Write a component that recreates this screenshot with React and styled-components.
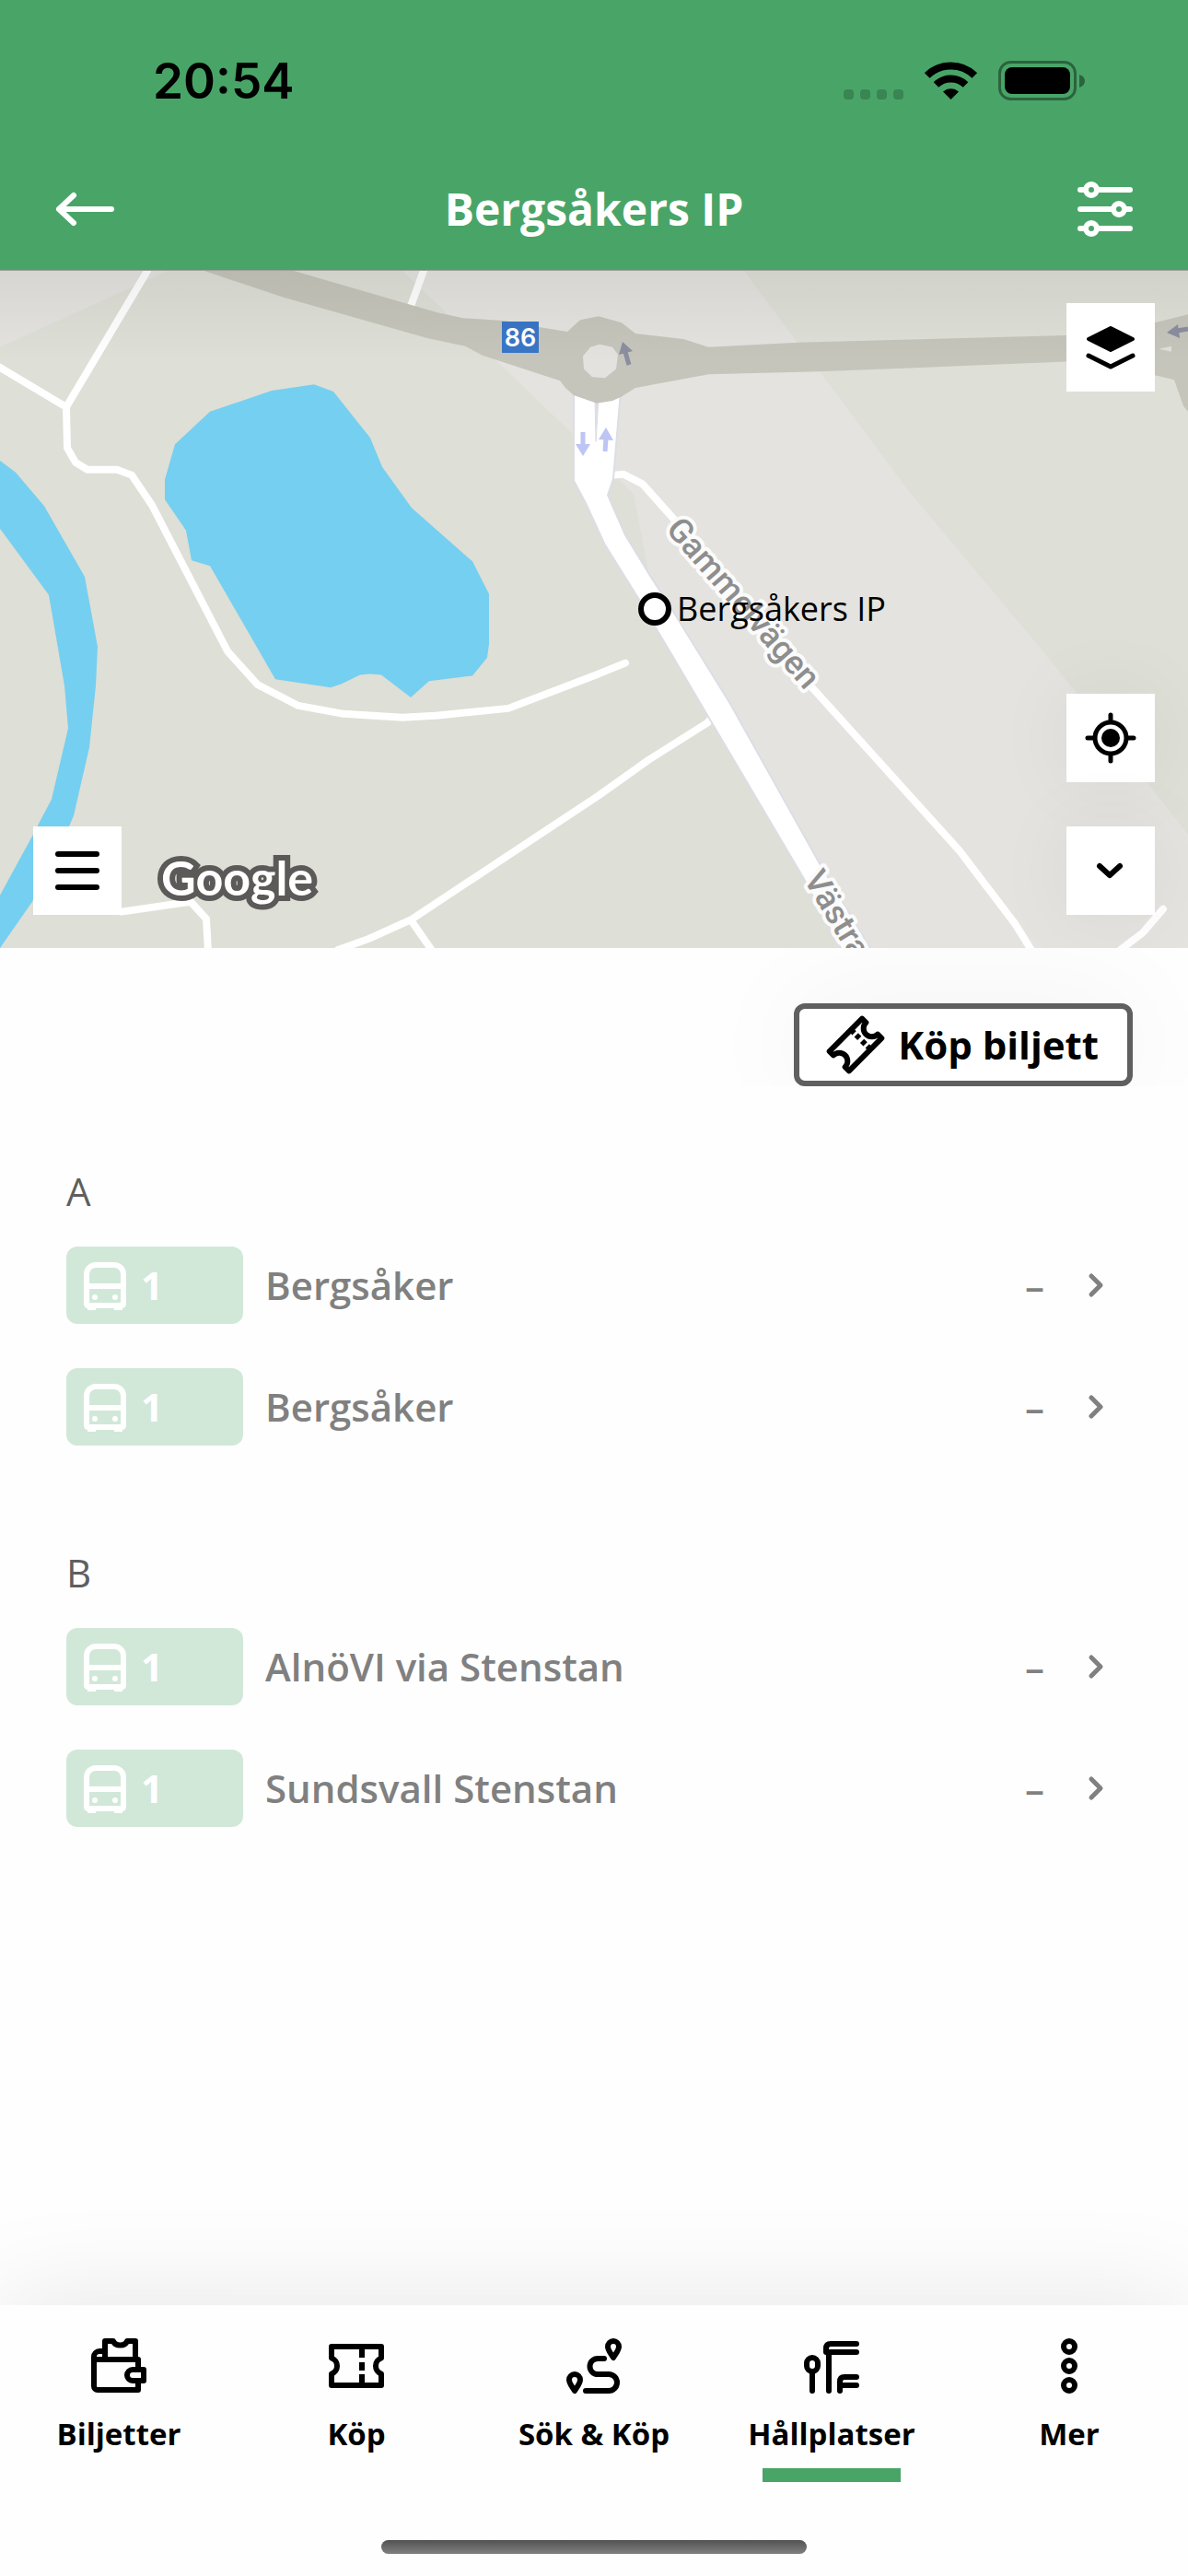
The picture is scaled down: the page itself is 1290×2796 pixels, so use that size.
import styled, { createGlobalStyle } from "styled-components";

const GREEN = "#48a567";

const GlobalStyle = createGlobalStyle`
    * {
        box-sizing: border-box;
    }

    body {
        margin: 0;
        background-color: #fefefe;
        font-family: "Open Sans", "Noto Sans", sans-serif;
        color: black;
    }

    button {
        font-family: inherit;
        cursor: pointer;
    }
`

const Screen = styled.div`
    display: flex;
    flex-direction: column;
    min-height: 100vh;
    overflow: hidden;
`

const Header = styled.header`
    background-color: ${GREEN};
`

const StatusBar = styled.div`
    display: flex;
    align-items: center;
    justify-content: space-between;
    height: 161px;
    padding: 14px 112px 0 166px;
`

const Clock = styled.time`
    font-family: Inter, sans-serif;
    font-size: 53px;
    line-height: 60px;
    font-weight: 600;
`

const StatusIcons = styled.div`
    display: flex;
    align-items: flex-end;
    gap: 23px;
    height: 45px;
`

const TitleBar = styled.div`
    display: grid;
    grid-template-columns: 60px 1fr 60px;
    align-items: center;
    height: 132px;
    padding: 0 60px;
`

const Title = styled.h1`
    margin: 0;
    color: white;
    font-size: 48px;
    line-height: 66px;
    font-weight: 700;
    text-align: center;
`

const IconButton = styled.button`
    display: flex;
    padding: 0;
    border: none;
    background: none;
    color: white;
`

const Icon = styled.svg`
    display: block;
    flex: none;
    width: 60px;
    height: 60px;
    fill: none;
    stroke: currentColor;
    stroke-width: ${props => props.$weight || 6};
    stroke-linecap: ${props => props.$cap || "round"};
    stroke-linejoin: round;
`

const MapArea = styled.section`
    position: relative;
    height: 736px;
    border-top: 1px solid #a3a29d;
    background-color: #dedfd6;
    overflow: hidden;
`

const MapLayer = styled.svg`
    position: absolute;
    inset: 0;
    width: 100%;
    height: 100%;
`

const MapShade = styled.div`
    position: absolute;
    inset: 0 0 auto 0;
    height: 100px;
    background: linear-gradient(rgba(0, 0, 0, 0.06), rgba(0, 0, 0, 0));
`

const MapControls = styled.div`
    position: absolute;
    top: 35px;
    bottom: 36px;
    ${props => props.$side}: 36px;
    display: flex;
    flex-direction: column;
    gap: 48px;
`

const MapButton = styled.button`
    display: flex;
    align-items: center;
    justify-content: center;
    width: 96px;
    height: 96px;
    padding: 0;
    border: none;
    background-color: white;
    color: black;
    box-shadow: 0 0 90px rgba(0, 0, 0, ${props => props.$shadow || 0});
    margin-top: ${props => props.$push ? "auto" : "0"};
`

const BuyBar = styled.div`
    display: flex;
    justify-content: flex-end;
    padding: 60px 60px 0;
    overflow: hidden;
`

const BuyButton = styled.button`
    display: flex;
    align-items: center;
    gap: 16px;
    height: 90px;
    padding: 0 31px;
    border: 6px solid #5f5f5f;
    border-radius: 12px;
    background-color: white;
    color: black;
    font-size: 42px;
    line-height: 58px;
    font-weight: 700;
    box-shadow: 0 0 120px rgba(0, 0, 0, 0.05);
`

const Departures = styled.main`
    display: flex;
    flex-direction: column;
    gap: 78px;
    padding: 78px 72px;
`

const StopName = styled.h2`
    margin: 0;
    color: #5f5f5f;
    font-size: 42px;
    line-height: 72px;
    font-weight: 400;
`

const LineList = styled.ul`
    margin: 0;
    padding: 0;
    list-style: none;
`

const LineRow = styled.button`
    display: flex;
    align-items: center;
    gap: 24px;
    width: 100%;
    height: 132px;
    padding: 0;
    border: none;
    background: none;
    color: #808080;
    font-size: 42px;
    line-height: 58px;
    font-weight: 600;
    text-align: left;
`

const LineBadge = styled.span`
    display: flex;
    align-items: center;
    gap: 9px;
    width: 192px;
    height: 84px;
    padding: 0 12px;
    border-radius: 12px;
    background-color: #d1e8d9;
    color: white;
    font-weight: 700;
`

const Destination = styled.span`
    flex: 1;
`

const TabBar = styled.footer`
    display: flex;
    flex-direction: column;
    align-items: center;
    gap: 63px;
    margin-top: auto;
    padding: 36px 0 24px;
    background-color: #fefefe;
    box-shadow: 0 0 120px rgba(0, 0, 0, 0.1);
`

const Tabs = styled.nav`
    display: grid;
    grid-template-columns: repeat(5, 1fr);
    width: 100%;
`

const Tab = styled.a`
    display: flex;
    flex-direction: column;
    align-items: center;
    gap: 20px;
    color: black;
    font-size: 33px;
    line-height: 48px;
    font-weight: 700;
    text-decoration: none;

    &::after {
        content: "";
        width: 150px;
        height: 15px;
        margin-top: -7px;
        background-color: ${props => props.$active ? GREEN : "transparent"};
    }
`

const HomeIndicator = styled.div`
    width: 462px;
    height: 15px;
    border-radius: 8px;
    background: linear-gradient(#525252, #808080);
`

const ICONS = {
    back: <path d="M61 30H4M20 15L4 30l16 15" />,
    filters: (
        <>
            <path d="M3 9h6M21 9h36M3 30h36M51 30h6M3 51h6M21 51h36" />
            <circle cx="15" cy="9" r="6" />
            <circle cx="45" cy="30" r="6" />
            <circle cx="15" cy="51" r="6" />
        </>
    ),
    layers: (
        <>
            <path d="M30 9L54 21 30 33 6 21z" fill="currentColor" strokeWidth="4" />
            <path d="M6 39l24 12 24-12" />
        </>
    ),
    locate: (
        <>
            <circle cx="30" cy="30" r="17" />
            <circle cx="30" cy="30" r="10" fill="currentColor" stroke="none" />
            <path d="M30 5v7M30 48v7M5 30h7M48 30h7" />
        </>
    ),
    down: <path d="M18 25l11 10 11-10" />,
    menu: <path d="M9 12h42M9 30h42M9 48h42" />,
    next: <path d="M27 20l10 10-10 10" />,
    bus: (
        <>
            <path d="M10 18a10 10 0 0 1 10-10h20a10 10 0 0 1 10 10v32q0 2-2 2H12q-2 0-2-2zM10 31h40" />
            <path d="M11 53h9v4h-9zM40 53h9v4h-9z" fill="currentColor" stroke="none" />
            <circle cx="19" cy="43" r="3" fill="currentColor" stroke="none" />
            <circle cx="41" cy="43" r="3" fill="currentColor" stroke="none" />
        </>
    ),
    ticketTilted: (
        <g transform="rotate(-45 30 30)">
            <path d="M5 15h50v6a8.500 8.500 0 0 0 0 18v6H5v-6a8.500 8.500 0 0 0 0-18z" />
            <path d="M38 15v5M38 23v5M38 32v5M38 40v5" />
        </g>
    ),
    wallet: (
        <>
            <path d="M14 14H9a6 6 0 0 0-6 6v32a4 4 0 0 0 4 4h44v-9M3 23h48v10" />
            <path d="M15 23V3h9c2 6 13 6 15 0h9v20" />
            <path d="M57 34v12H45a6 6 0 0 1 0-12z" />
        </>
    ),
    ticket: (
        <>
            <path d="M3 9h54v12.500a9 9 0 0 0 0 17V51H3V38.500a9 9 0 0 0 0-17z" />
            <path d="M36 9v12M36 26v9M36 39v12" />
        </>
    ),
    route: (
        <>
            <path d="M51 21c-3-5-6-8-6-12a6 6 0 0 1 12 0c0 4-3 7-6 12z" />
            <path d="M9 57c-3-5-6-8-6-12a6 6 0 0 1 12 0c0 4-3 7-6 12z" />
            <path d="M41 22h-7a8 8 0 0 0 0 17h12a9 9 0 0 1 0 18H21" />
        </>
    ),
    stop: (
        <>
            <rect x="3" y="21" width="12" height="15" rx="6" />
            <path d="M9 37v20M27 16v41" />
            <path d="M57 6H29q-5 0-5 5v4h33" />
            <path d="M57 42H44q-5 0-5 5v10M39 51h18" />
        </>
    ),
    more: (
        <>
            <circle cx="30" cy="9" r="6" />
            <circle cx="30" cy="30" r="6" />
            <circle cx="30" cy="51" r="6" />
        </>
    ),
};

const AppIcon = ({ name, weight, cap }) => (
    <Icon viewBox="0 0 60 60" $weight={weight} $cap={cap} aria-hidden="true" overflow="visible">
        {ICONS[name]}
    </Icon>
);

const STOPS = [
    { name: "A", lines: [{ line: "1", to: "Bergsåker" }, { line: "1", to: "Bergsåker" }] },
    { name: "B", lines: [{ line: "1", to: "AlnöVI via Stenstan" }, { line: "1", to: "Sundsvall Stenstan" }] },
];

const TABS = [
    { label: "Biljetter", icon: "wallet", href: "#biljetter" },
    { label: "Köp", icon: "ticket", href: "#kop", cap: "butt" },
    { label: "Sök & Köp", icon: "route", href: "#sok" },
    { label: "Hållplatser", icon: "stop", href: "#hallplatser", active: true },
    { label: "Mer", icon: "more", href: "#mer" },
];

const PhoneStatus = () => (
    <StatusBar>
        <Clock>20:54</Clock>
        <StatusIcons>
            <svg width="65" height="13" viewBox="0 0 65 13" fill="#398553">
                <rect width="11" height="11" rx="4" />
                <rect x="18" width="11" height="11" rx="4" />
                <rect x="36" width="11" height="11" rx="4" />
                <rect x="54" width="11" height="11" rx="4" />
            </svg>
            <svg width="57" height="44" viewBox="0 0 57 44">
                <path d="M28.500 42L20 33.500a12.500 12.500 0 0 1 17 0z" />
                <path d="M12.500 26a23 23 0 0 1 32 0M2.700 16a37 37 0 0 1 51.600 0" fill="none" stroke="black" strokeWidth="8" />
            </svg>
            <svg width="94" height="44" viewBox="0 0 94 44">
                <rect x="1.500" y="1.500" width="82" height="40" rx="12" fill="none" stroke="#2c633e" strokeWidth="3" />
                <rect x="7" y="7" width="71" height="29" rx="8" />
                <path d="M88 15q6 2 6 7t-6 7z" fill="#2c633e" />
            </svg>
        </StatusIcons>
    </StatusBar>
);

const Terrain = () => (
    <MapLayer viewBox="0 0 1290 746" preserveAspectRatio="none" aria-hidden="true">
        <g fill="#e4e3df">
            <path d="M0 0H182L0 84z" />
            <path d="M437 0H808L867 81 891 112 984 239 1140 428 1290 621V746H945L783 474 704 331 688 246 673 231 622 180z" />
        </g>
        <g fill="#75cff0">
            <path d="M341 125L362 133 402 184 415 216 447 261 513 320 531 356V411L529 426 513 446 466 452 446 470 414 445 402 444 391 445 371 455 359 459 299 450 228 325 208 319 202 286 179 252V230L190 191 228 155 295 132z" />
            <path d="M0 209L17 222 48 259 92 337 106 414 104 457 97 525 80 600 75 612 35 695 0 746V688L36 621 41 611 56 582 74 504 70 457 53 357 0 284z" />
        </g>
        <g fill="none" stroke="white" strokeWidth="8" strokeLinejoin="round" strokeLinecap="round">
            <path d="M160 0L72 150 73 195 82 211 95 219H127L143 225 165 258 247 419 280 456 324 479 373 488 437 492 473 490 552 482 650 444 679 432" />
            <path d="M-4 104L72 150M462-6L446 39" />
            <path d="M132 706L207 695 224 714 226 750M367 748L400 736 446 715 650 578 704 539 768 498 775 490M446 715L470 750" />
            <path d="M667 225L677 224 698 235 733 275 880 457 1042 639 1102 719 1121 750M1214 750L1241 729 1263 703" />
        </g>
        <path
            d="M623 132V231L636 256 657 302 694 362 872 668 914 748H946L889 651 793 477 729 372 706 336 679 291 660 247 666 229 674 132z"
            fill="white"
            stroke="#dcdee6"
            strokeWidth="2"
        />
        <path d="M646 140L647 188 650 140z" fill="#dcdee6" stroke="#dcdee6" strokeWidth="1" />
        <path
            d="M222 0L307 29 464 74 505 83 524 93 608 121 614 129 623 137 648 146 665 143 674 139 690 129 769 114 889 111 1158 100 1254 115 1275 120 1285 149 1290 155V48L1254 57 1158 71 867 79 769 84 742 75 690 69 675 57 650 50 630 54 616 67 585 62 549 55 503 52 475 46 319 0z"
            fill="#c5c5bb"
        />
        <path d="M651 81L665 84 671 92 669 108 657 118 643 117 634 108 633 94 641 84z" fill="#e3e2de" />
        <path d="M1258 86L1272 83V89z" fill="#dedfd6" />
    </MapLayer>
);

const MapLabels = () => (
    <MapLayer viewBox="0 0 1290 735">
        <rect x="545" y="55" width="40" height="34" fill="#3976c7" />
        <text x="565" y="82" textAnchor="middle" fontFamily="Inter, sans-serif" fontSize="27" fontWeight="600" fill="white">86</text>
        <g fill="none" stroke="#bcc5f3" strokeWidth="5">
            <path d="M633 175v14" />
            <path d="M657 196l1-14" />
        </g>
        <path d="M625 188h16l-8 13zM650 183l8-13 8 14z" fill="#bcc5f3" />
        <path d="M683 102l-4-14M1290 63l-12 2" stroke="#8a8e9f" strokeWidth="5" />
        <path d="M676 77l11 10-15 4zM1267 67l12-9 2 15z" fill="#8a8e9f" />
        <g
            fontFamily="Roboto, sans-serif"
            fontSize="36"
            fontWeight="500"
            fill="#8e8e8e"
            stroke="#fbfbfb"
            strokeWidth="8"
            strokeLinejoin="round"
            paintOrder="stroke"
        >
            <text transform="translate(722 281) rotate(49)">Gammelvägen</text>
            <text transform="translate(872 660) rotate(59)">Västra</text>
        </g>
        <circle cx="711" cy="367" r="15" fill="white" stroke="black" strokeWidth="6" />
        <text x="735" y="380" fontFamily="Open Sans, sans-serif" fontSize="36">Bergsåkers IP</text>
        <text
            x="175"
            y="678"
            fontFamily="Lato, sans-serif"
            fontSize="52"
            fontWeight="700"
            fill="white"
            stroke="#5b5a58"
            strokeWidth="12"
            paintOrder="stroke"
        >
            Google
        </text>
    </MapLayer>
);

const StopMap = () => (
    <MapArea aria-label="Karta">
        <Terrain />
        <MapLabels />
        <MapShade />
        <MapControls $side="left">
            <MapButton aria-label="Meny" $push><AppIcon name="menu" /></MapButton>
        </MapControls>
        <MapControls $side="right">
            <MapButton aria-label="Kartlager"><AppIcon name="layers" weight={5} /></MapButton>
            <MapButton aria-label="Min position" $push $shadow={0.06}><AppIcon name="locate" weight={5} /></MapButton>
            <MapButton aria-label="Dölj karta" $shadow={0.06}><AppIcon name="down" /></MapButton>
        </MapControls>
    </MapArea>
);

const StopSection = ({ stop }) => (
    <section>
        <StopName>{stop.name}</StopName>
        <LineList>
            {stop.lines.map((item, index) => (
                <li key={index}>
                    <LineRow>
                        <LineBadge><AppIcon name="bus" />{item.line}</LineBadge>
                        <Destination>{item.to}</Destination>
                        <span>–</span>
                        <AppIcon name="next" weight={5} />
                    </LineRow>
                </li>
            ))}
        </LineList>
    </section>
);

const App = () => {
    return (
        <Screen>
            <GlobalStyle />
            <Header>
                <PhoneStatus />
                <TitleBar>
                    <IconButton aria-label="Tillbaka"><AppIcon name="back" /></IconButton>
                    <Title>Bergsåkers IP</Title>
                    <IconButton aria-label="Filter"><AppIcon name="filters" /></IconButton>
                </TitleBar>
            </Header>
            <StopMap />
            <BuyBar>
                <BuyButton><AppIcon name="ticketTilted" cap="butt" />Köp biljett</BuyButton>
            </BuyBar>
            <Departures>
                {STOPS.map(stop => <StopSection key={stop.name} stop={stop} />)}
            </Departures>
            <TabBar>
                <Tabs>
                    {TABS.map(tab => (
                        <Tab key={tab.label} href={tab.href} $active={tab.active}>
                            <AppIcon name={tab.icon} cap={tab.cap} />
                            {tab.label}
                        </Tab>
                    ))}
                </Tabs>
                <HomeIndicator />
            </TabBar>
        </Screen>
    );
}

export default App;
